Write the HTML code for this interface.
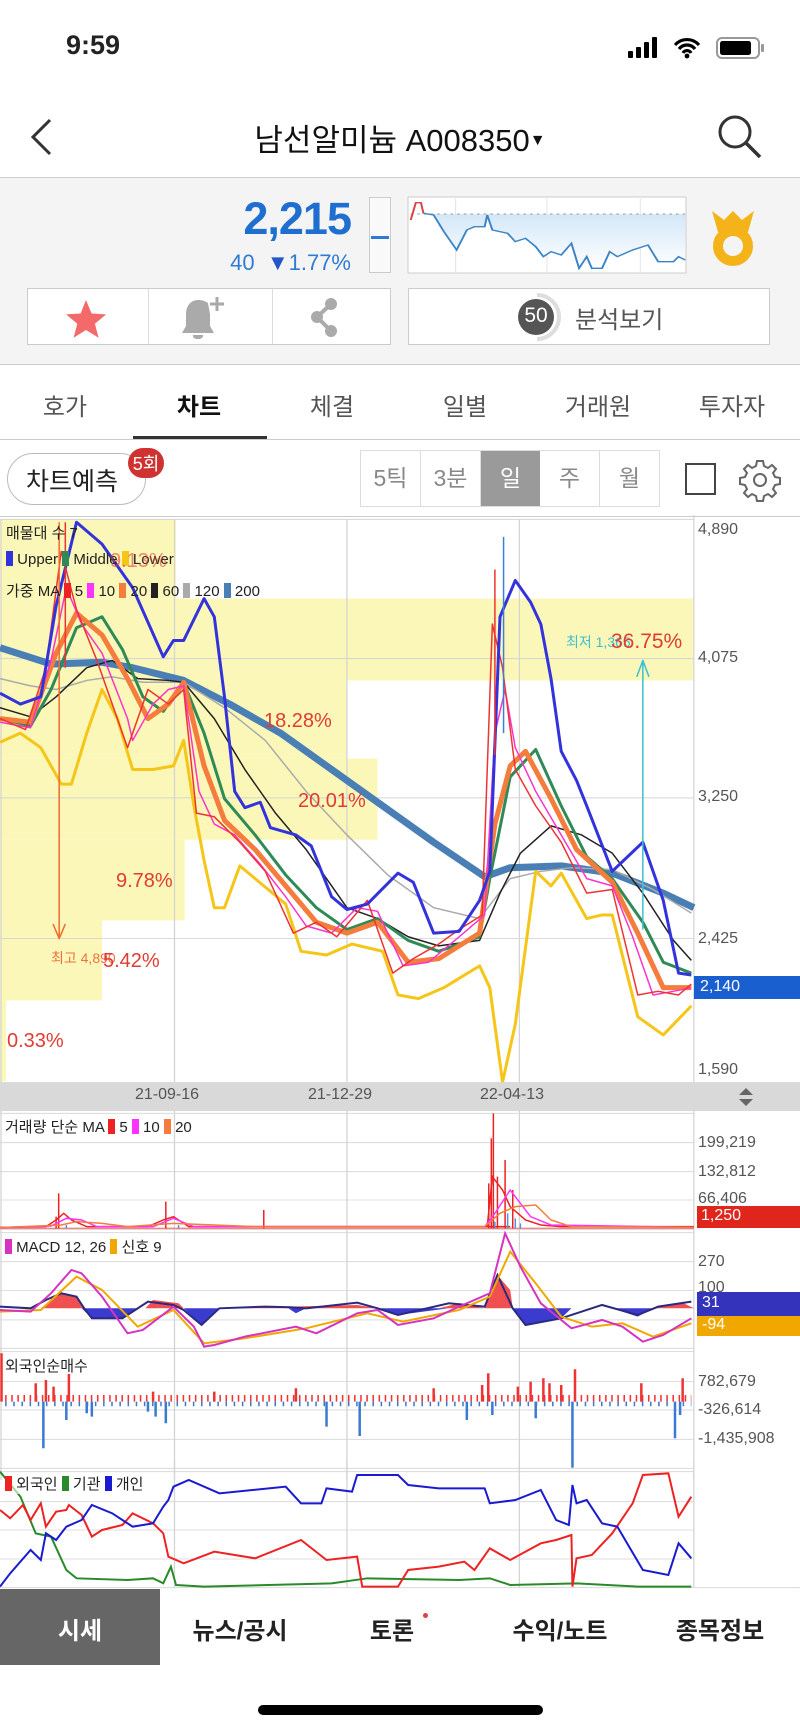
<!DOCTYPE html>
<html><head><meta charset="utf-8">
<style>
*{margin:0;padding:0;box-sizing:border-box}
body{width:800px;height:1731px;background:#fff;font-family:"Liberation Sans","Noto Sans CJK KR",sans-serif;position:relative;overflow:hidden;color:#222}
.a{position:absolute}
.t{position:absolute;white-space:nowrap}
</style></head><body>
<!-- status bar -->
<div class="t" style="left:66px;top:30px;font-size:27px;font-weight:bold">9:59</div>
<svg class="a" style="left:625px;top:36px" width="150" height="26">
<rect x="3" y="15" width="5" height="7" rx="1" fill="#000"/><rect x="11" y="11" width="5" height="11" rx="1" fill="#000"/><rect x="19" y="6" width="5" height="16" rx="1" fill="#000"/><rect x="27" y="1" width="5" height="21" rx="1" fill="#000"/>
<path d="M50 9a16 16 0 0 1 24 0M54 13a10 10 0 0 1 16 0M58 17a4.5 4.5 0 0 1 8 0" stroke="#000" stroke-width="3.2" fill="none"/><circle cx="62" cy="20" r="2.4" fill="#000"/>
<rect x="92" y="2" width="42" height="20" rx="5" stroke="#999" stroke-width="2" fill="none"/><rect x="95" y="5" width="31" height="14" rx="2.5" fill="#000"/><rect x="136" y="8" width="3" height="8" rx="1" fill="#999"/>
</svg>
<!-- header -->
<svg class="a" style="left:28px;top:117px" width="28" height="40"><path d="M22 3L5 20L22 37" stroke="#333" stroke-width="3" fill="none"/></svg>
<div class="t" style="left:0;width:800px;text-align:center;top:115px;font-size:31px;color:#111">남선알미늄 A008350<span style="font-size:16px;vertical-align:6px">▼</span></div>
<svg class="a" style="left:715px;top:112px" width="48" height="48"><circle cx="20" cy="20" r="15" stroke="#333" stroke-width="3" fill="none"/><path d="M31 31L45 45" stroke="#333" stroke-width="3.5"/></svg>
<!-- info area -->
<div class="a" style="left:0;top:177px;width:800px;height:188px;background:#f4f4f4;border-top:1px solid #ccc;border-bottom:1px solid #ccc"></div>
<div class="t" style="right:449px;top:193px;font-size:45px;font-weight:bold;color:#1f6fd0;letter-spacing:-1px">2,215</div>
<div class="t" style="right:449px;top:250px;font-size:22px;color:#2f7bd4">40 &nbsp;<span style="color:#2456c8">▼</span>1.77%</div>
<div class="a" style="left:369px;top:197px;width:22px;height:76px;border:1px solid #ccc;background:#f9f9f9"></div>
<div class="a" style="left:371px;top:236px;width:18px;height:3px;background:#2f7bd4"></div>
<svg class="a" style="left:0;top:0" width="800" height="300">
<defs><linearGradient id="sg" x1="0" y1="0" x2="0" y2="1"><stop offset="0" stop-color="#d3e7f8"/><stop offset="1" stop-color="#fff"/></linearGradient></defs>
<rect x="408" y="197" width="278" height="76" fill="#fff" stroke="#ccc"/>
<g transform="translate(0,160) scale(0.5102,0.3333)">
<line x1="893" y1="115" x2="893" y2="340" stroke="#e4e4e4" stroke-width="2"/><line x1="1072" y1="115" x2="1072" y2="340" stroke="#e4e4e4" stroke-width="2"/><line x1="1255" y1="115" x2="1255" y2="340" stroke="#e4e4e4" stroke-width="2"/>
<polygon fill="url(#sg)" points="805,162 830,160 850,165 870,215 895,270 915,210 930,200 950,200 955,165 965,210 995,220 1010,245 1030,235 1050,260 1065,290 1080,275 1100,285 1120,250 1135,325 1150,290 1160,325 1180,325 1195,275 1210,290 1240,270 1270,255 1290,305 1320,305 1330,290 1343,300 1343,162"/>
<line x1="805" y1="162" x2="1343" y2="162" stroke="#999" stroke-width="3" stroke-dasharray="5 8"/>
<polyline fill="none" stroke="#d44" stroke-width="4" points="805,180 815,128 825,128 830,160"/>
<polyline fill="none" stroke="#3c84c8" stroke-width="4" points="830,160 850,165 870,215 895,270 915,210 930,200 950,200 955,165 965,210 995,220 1010,245 1030,235 1050,260 1065,290 1080,275 1100,285 1120,250 1135,325 1150,290 1160,325 1180,325 1195,275 1210,290 1240,270 1270,255 1290,305 1320,305 1330,290 1343,300"/>
</g>
<!-- medal -->
<path d="M712 211l12 9 9-9 9 9 12-9-6 21h-30z" fill="#f5b31a"/>
<circle cx="733" cy="246" r="15" stroke="#f5b31a" stroke-width="10" fill="none"/>
</svg>
<!-- buttons -->
<div class="a" style="left:27px;top:288px;width:364px;height:57px;background:#fff;border:1px solid #ccc"></div>
<div class="a" style="left:148px;top:289px;width:1px;height:55px;background:#ddd"></div>
<div class="a" style="left:272px;top:289px;width:1px;height:55px;background:#ddd"></div>
<div class="a" style="left:408px;top:288px;width:362px;height:57px;background:#fff;border:1px solid #ccc"></div>
<svg class="a" style="left:0;top:280px" width="800" height="70">
<path d="M86 20l5.6 13.5 14.5.9-11.2 9.3 3.7 14.1L86 50l-12.4 7.8 3.7-14.1-11.2-9.3 14.5-.9z" fill="#f46a6a"/>
<path d="M198 59c-6 0-5-4-5-4h10s1 4-5 4z M208 23c-3-2-6-3-10-3-8 0-12 7-12 14v12l-4 7h32l-4-7V34" fill="#aaa"/>
<path d="M217 17v14M210 24h14" stroke="#aaa" stroke-width="3"/>
<circle cx="331" cy="24" r="6" fill="#aaa"/><circle cx="331" cy="51" r="6" fill="#aaa"/><circle cx="317" cy="37" r="6" fill="#aaa"/><path d="M331 24L317 37L331 51" stroke="#aaa" stroke-width="4" fill="none"/>
<path d="M537 15a22 22 0 0 1 0 44" stroke="#ddd" stroke-width="4" fill="none"/>
<circle cx="536" cy="37" r="18" fill="#555"/>
</svg>
<div class="t" style="left:518px;top:304px;width:36px;text-align:center;font-size:21px;color:#fff">50</div>
<div class="t" style="left:575px;top:300px;font-size:24px;color:#555">분석보기</div>
<!-- tabs -->
<div class="t" style="left:0;top:387px;width:800px;font-size:24px;color:#555">
<span class="t" style="left:65px;transform:translateX(-50%)">호가</span>
<span class="t" style="left:199px;transform:translateX(-50%);font-weight:bold;color:#111">차트</span>
<span class="t" style="left:332px;transform:translateX(-50%)">체결</span>
<span class="t" style="left:465px;transform:translateX(-50%)">일별</span>
<span class="t" style="left:598px;transform:translateX(-50%)">거래원</span>
<span class="t" style="left:732px;transform:translateX(-50%)">투자자</span>
</div>
<div class="a" style="left:133px;top:436px;width:134px;height:3px;background:#333"></div>
<div class="a" style="left:0;top:439px;width:800px;height:1px;background:#ccc"></div>
<!-- toolbar -->
<div class="a" style="left:7px;top:453px;width:139px;height:52px;border:1.5px solid #bbb;border-radius:26px;background:#fff"></div>
<div class="t" style="left:26px;top:462px;font-size:25px;color:#222">차트예측</div>
<div class="a" style="left:128px;top:448px;width:36px;height:30px;border-radius:15px;background:#d03232"></div>
<div class="t" style="left:128px;top:450px;width:36px;text-align:center;font-size:18px;color:#fff">5회</div>
<div class="a" style="left:360px;top:450px;width:300px;height:57px;border:1px solid #ddd;display:flex;font-size:23px;color:#888">
<div style="flex:1;text-align:center;line-height:55px;border-right:1px solid #ddd">5틱</div>
<div style="flex:1;text-align:center;line-height:55px;border-right:1px solid #ddd">3분</div>
<div style="flex:1;text-align:center;line-height:55px;background:#9a9a9a;color:#fff">일</div>
<div style="flex:1;text-align:center;line-height:55px;border-right:1px solid #ddd">주</div>
<div style="flex:1;text-align:center;line-height:55px">월</div>
</div>
<div class="a" style="left:685px;top:463px;width:31px;height:32px;border:2px solid #444"></div>
<svg class="a" style="left:738px;top:458px" width="44" height="44" viewBox="-22 -22 44 44">
<path fill="none" stroke="#666" stroke-width="2" d="M-3-19h6l1 5 4 2 4-3 4 4-3 4 2 4 5 1v6l-5 1-2 4 3 4-4 4-4-3-4 2-1 5h-6l-1-5-4-2-4 3-4-4 3-4-2-4-5-1v-6l5-1 2-4-3-4 4-4 4 3 4-2z"/><circle r="6" fill="none" stroke="#666" stroke-width="2"/></svg>
<div class="a" style="left:0;top:516px;width:800px;height:1px;background:#ccc"></div>

<!-- main chart -->
<svg class="a" style="left:0;top:0" width="800" height="1731">
<g transform="translate(0,515) scale(0.5102,0.3636)">
<g fill="#fbf7b9">
<rect x="0" y="12" width="345" height="218"/>
<rect x="0" y="230" width="1360" height="225"/>
<rect x="0" y="455" width="680" height="215"/>
<rect x="0" y="670" width="740" height="223"/>
<rect x="0" y="893" width="362" height="222"/>
<rect x="0" y="1115" width="200" height="220"/>
<rect x="0" y="1335" width="12" height="222"/>
</g>
<g stroke="#d4d4d4" stroke-width="2.5">
<line x1="0" y1="12" x2="1360" y2="12"/><line x1="0" y1="395" x2="1360" y2="395"/><line x1="0" y1="778" x2="1360" y2="778"/><line x1="0" y1="1165" x2="1360" y2="1165"/>
<line x1="342" y1="12" x2="342" y2="1565"/><line x1="680" y1="12" x2="680" y2="1565"/><line x1="1018" y1="12" x2="1018" y2="1565"/><line x1="1360" y1="0" x2="1360" y2="1568"/><line x1="2" y1="12" x2="2" y2="1565"/>
</g>
<g fill="none" stroke-linejoin="round" vector-effect="non-scaling-stroke">
<polyline stroke="#4a7fb5" stroke-width="7" vector-effect="non-scaling-stroke" points="0,365 100,410 200,405 260,420 360,455 450,520 550,600 650,700 750,800 850,900 950,995 1000,970 1100,965 1200,985 1300,1040 1360,1080"/>
<polyline stroke="#aaa" stroke-width="1.5" vector-effect="non-scaling-stroke" points="0,450 60,470 110,480 170,455 220,445 280,460 360,460 440,530 520,620 600,760 680,880 760,990 850,1080 940,1110 1000,1000 1060,980 1120,970 1200,975 1280,1030 1355,1095"/>
<polyline stroke="#222" stroke-width="1.5" vector-effect="non-scaling-stroke" points="0,530 60,555 110,500 170,420 220,400 270,450 330,455 360,460 420,560 480,700 540,820 600,920 680,1080 740,1110 800,1160 860,1185 940,1170 980,1040 1020,930 1080,855 1140,880 1200,930 1260,1040 1320,1170 1355,1225"/>
<polyline stroke="#f5c518" stroke-width="3" vector-effect="non-scaling-stroke" points="0,625 40,600 80,640 120,740 140,740 170,600 200,480 230,560 260,700 300,700 340,690 360,620 380,800 400,950 420,1080 440,1080 470,965 500,1000 560,1070 590,1200 640,1210 690,1180 750,1200 780,1320 820,1330 870,1300 940,1240 960,1300 985,1560 1010,1400 1050,980 1080,1020 1100,985 1150,1110 1180,1100 1200,1100 1250,1380 1300,1430 1355,1350"/>
<polyline stroke="#2e8b57" stroke-width="3" vector-effect="non-scaling-stroke" points="0,560 60,580 100,480 150,310 200,280 240,370 280,500 320,540 360,460 400,600 440,780 500,880 560,990 620,1080 680,1140 740,1110 800,1170 860,1200 940,1160 960,1000 1000,720 1050,645 1100,800 1150,940 1200,1000 1260,1120 1300,1230 1355,1260"/>
<polyline stroke="#f47c3c" stroke-width="5" vector-effect="non-scaling-stroke" points="0,560 60,570 110,380 150,270 200,330 250,450 290,560 330,520 360,460 400,690 440,840 500,920 560,1020 620,1120 680,1150 740,1120 800,1230 860,1220 940,1150 970,850 1000,690 1030,650 1080,780 1130,920 1200,1010 1250,1150 1300,1300 1355,1300"/>
<polyline stroke="#ff33cc" stroke-width="1.5" vector-effect="non-scaling-stroke" points="0,570 60,585 100,400 130,200 160,300 200,380 250,560 260,620 300,520 330,480 360,470 390,760 420,850 460,880 510,960 560,1050 600,1130 650,1150 700,1080 740,1090 790,1240 840,1230 900,1160 950,1100 970,600 990,480 1010,640 1050,760 1100,880 1150,1000 1200,1020 1240,1160 1280,1320 1320,1310 1355,1300"/>
<polyline stroke="#e33" stroke-width="1.5" vector-effect="non-scaling-stroke" points="0,560 50,590 90,420 120,100 150,260 190,400 250,640 290,480 330,520 360,480 385,820 420,830 470,900 520,980 575,1150 620,1120 660,1160 720,1060 770,1260 810,1220 860,1180 900,1140 945,1100 965,300 985,420 1010,700 1050,800 1100,900 1150,1040 1200,1030 1250,1320 1290,1310 1330,1320 1355,1290"/>
<polyline stroke="#3333dd" stroke-width="3" vector-effect="non-scaling-stroke" points="0,490 40,520 80,500 110,250 150,20 200,80 260,200 320,390 340,345 360,345 400,230 420,280 440,500 460,760 480,805 510,790 530,860 580,880 610,910 650,1050 680,1085 720,1070 780,985 810,1010 850,1150 900,1145 940,1060 960,980 980,280 1010,180 1040,240 1060,300 1080,450 1100,650 1130,730 1150,800 1200,980 1260,900 1300,1060 1330,1260 1355,1265"/>
<line x1="987" y1="60" x2="987" y2="600" stroke="#3c7fd4" stroke-width="1.5" vector-effect="non-scaling-stroke"/>
<line x1="970" y1="150" x2="970" y2="660" stroke="#e33" stroke-width="1.5" vector-effect="non-scaling-stroke"/>
<line x1="128" y1="20" x2="128" y2="420" stroke="#e33" stroke-width="1.5" vector-effect="non-scaling-stroke"/>
<line x1="116" y1="20" x2="116" y2="1165" stroke="#f06a30" stroke-width="1.5" vector-effect="non-scaling-stroke"/>
<polyline points="104,1125 116,1165 128,1125" stroke="#f06a30" stroke-width="1.5" vector-effect="non-scaling-stroke"/>
<line x1="1260" y1="400" x2="1260" y2="1140" stroke="#3cc0d0" stroke-width="1.5" vector-effect="non-scaling-stroke"/>
<polyline points="1248,445 1260,400 1272,445" stroke="#3cc0d0" stroke-width="1.5" vector-effect="non-scaling-stroke"/>
</g>
</g>
</svg>
<div class="t" style="left:6px;top:522px;font-size:15px;color:#222">매물대 수 7</div>
<div class="t" style="left:6px;top:551px;font-size:15px;color:#222"><span style="display:inline-block;width:7px;height:15px;background:#3333dd;vertical-align:-2px"></span> Upper <span style="display:inline-block;width:7px;height:15px;background:#2e8b57;vertical-align:-2px"></span> Middle <span style="display:inline-block;width:7px;height:15px;background:#f5c518;vertical-align:-2px"></span> Lower</div>
<div class="t" style="left:6px;top:580px;font-size:15px;color:#222">가중 MA <span style="display:inline-block;width:7px;height:15px;background:#e22;vertical-align:-2px"></span> 5 <span style="display:inline-block;width:7px;height:15px;background:#f3f;vertical-align:-2px"></span> 10 <span style="display:inline-block;width:7px;height:15px;background:#f47c3c;vertical-align:-2px"></span> 20 <span style="display:inline-block;width:7px;height:15px;background:#222;vertical-align:-2px"></span> 60 <span style="display:inline-block;width:7px;height:15px;background:#aaa;vertical-align:-2px"></span> 120 <span style="display:inline-block;width:7px;height:15px;background:#4a7fb5;vertical-align:-2px"></span> 200</div>
<div class="t" style="left:110px;top:550px;font-size:20px;color:#e03c31;opacity:.6">9.13%</div>
<div class="t" style="left:264px;top:710px;font-size:20px;color:#e03c31">18.28%</div>
<div class="t" style="left:298px;top:790px;font-size:20px;color:#e03c31">20.01%</div>
<div class="t" style="left:116px;top:870px;font-size:20px;color:#e03c31">9.78%</div>
<div class="t" style="left:51px;top:948px;font-size:14px;color:#f07040">최고 4,890</div>
<div class="t" style="left:103px;top:950px;font-size:20px;color:#e03c31">5.42%</div>
<div class="t" style="left:7px;top:1030px;font-size:20px;color:#e03c31">0.33%</div>
<div class="t" style="left:566px;top:632px;font-size:14px;color:#3cc0d0">최저 1,365</div>
<div class="t" style="left:611px;top:630px;font-size:21px;color:#e03c31">36.75%</div>
<div class="t" style="left:698px;top:521px;font-size:16px;color:#555">4,890</div>
<div class="t" style="left:698px;top:649px;font-size:16px;color:#555">4,075</div>
<div class="t" style="left:698px;top:788px;font-size:16px;color:#555">3,250</div>
<div class="t" style="left:698px;top:930px;font-size:16px;color:#555">2,425</div>
<div class="a" style="left:694px;top:976px;width:106px;height:23px;background:#1a5fd0"></div>
<div class="t" style="left:700px;top:978px;font-size:16px;color:#fff">2,140</div>
<div class="t" style="left:698px;top:1061px;font-size:16px;color:#555">1,590</div>
<!-- date bar -->
<div class="a" style="left:0;top:1082px;width:800px;height:29px;background:#d9d9d9"></div>
<div class="t" style="left:135px;top:1086px;font-size:16px;color:#555">21-09-16</div>
<div class="t" style="left:308px;top:1086px;font-size:16px;color:#555">21-12-29</div>
<div class="t" style="left:480px;top:1086px;font-size:16px;color:#555">22-04-13</div>
<svg class="a" style="left:738px;top:1087px" width="16" height="20"><path d="M1 8L8 1l7 7zM1 12l7 7 7-7z" fill="#666"/></svg>
<!-- lower panels -->
<svg class="a" style="left:0;top:0" width="800" height="1731">
<g transform="translate(0,1080) scale(0.5102,0.3333)">
<g stroke="#d4d4d4" stroke-width="2.5">
<line x1="0" y1="100" x2="1360" y2="100"/><line x1="0" y1="188" x2="1360" y2="188"/><line x1="0" y1="275" x2="1360" y2="275"/><line x1="0" y1="360" x2="1360" y2="360"/><line x1="0" y1="448" x2="1360" y2="448"/>
<line x1="0" y1="458" x2="1360" y2="458"/><line x1="0" y1="545" x2="1360" y2="545"/><line x1="0" y1="632" x2="1360" y2="632"/><line x1="0" y1="720" x2="1360" y2="720"/><line x1="0" y1="805" x2="1360" y2="805"/>
<line x1="0" y1="815" x2="1360" y2="815"/><line x1="0" y1="905" x2="1360" y2="905"/><line x1="0" y1="990" x2="1360" y2="990"/><line x1="0" y1="1078" x2="1360" y2="1078"/><line x1="0" y1="1165" x2="1360" y2="1165"/>
<line x1="342" y1="90" x2="342" y2="1200"/><line x1="680" y1="90" x2="680" y2="1200"/><line x1="1018" y1="90" x2="1018" y2="1200"/><line x1="1360" y1="90" x2="1360" y2="1200"/><line x1="2" y1="90" x2="2" y2="1200"/>
</g>
<g fill="none" stroke-width="1.5">
<line x1="0" y1="445" x2="1360" y2="445" stroke="#e88" vector-effect="non-scaling-stroke"/>
<path stroke="#e22" vector-effect="non-scaling-stroke" d="M115 445V340M110 445V410M325 445V365M517 445V390M967 445V100M963 445V175M990 445V240M958 445V310M975 445V290M1005 445V330"/>
<polyline stroke="#e22" vector-effect="non-scaling-stroke" points="0,442 90,440 110,420 125,400 140,420 170,440 290,440 320,420 340,410 370,440 1000,440 955,440 965,290 985,330 1000,380 1030,420 1060,435 1100,440 1360,440"/>
<polyline stroke="#f3f" vector-effect="non-scaling-stroke" points="0,443 100,438 130,415 160,420 190,440 300,440 340,415 380,440 950,440 970,400 1000,330 1010,350 1040,410 1080,435 1360,442"/>
<polyline stroke="#f47c3c" vector-effect="non-scaling-stroke" points="0,443 120,435 150,425 200,430 250,440 340,430 420,435 500,440 620,440 950,440 980,400 1010,380 1050,375 1080,420 1120,440 1360,442"/>
<path stroke="#5b8fd8" vector-effect="non-scaling-stroke" d="M970 445V425M995 445V400M1010 445V415M1020 445V430M130 445V435M350 445V435"/>
</g>
<g>
<polygon fill="#f05050" points="80,685 120,640 150,650 165,685"/>
<polygon fill="#f05050" points="285,685 300,660 350,670 360,685"/>
<polygon fill="#f05050" points="950,685 975,585 1000,630 1005,685"/>
<polygon fill="#f05050" points="420,685 700,675 740,685"/>
<polygon fill="#f05050" points="860,685 900,670 950,685"/>
<polygon fill="#f05050" points="1280,685 1340,670 1360,685"/>
<polygon fill="#3b3bd0" points="160,685 180,715 240,715 265,690 270,685"/>
<polygon fill="#3b3bd0" points="360,685 395,735 420,700 430,685"/>
<polygon fill="#3b3bd0" points="1005,685 1030,735 1100,715 1120,685"/>
<polygon fill="#3b3bd0" points="565,685 580,700 600,685"/>
<polygon fill="#3b3bd0" points="740,685 780,705 880,685"/>
<polygon fill="#3b3bd0" points="1200,685 1250,710 1280,685"/>
</g>
<g fill="none" stroke-width="2">
<polyline stroke="#2a2a80" vector-effect="non-scaling-stroke" points="0,680 60,685 90,660 120,640 150,650 165,685 180,715 240,715 265,690 290,665 340,675 360,690 395,735 430,685 520,680 570,682 600,685 700,668 740,685 780,705 880,670 950,680 975,585 1005,685 1030,735 1100,715 1180,675 1250,705 1290,680 1355,665"/>
<polyline stroke="#f0a800" vector-effect="non-scaling-stroke" points="0,695 80,690 150,590 200,630 270,740 340,690 400,790 480,775 600,745 720,700 790,725 900,690 960,650 1000,515 1050,610 1100,710 1160,740 1220,730 1280,770 1355,730"/>
<polyline stroke="#d633c0" vector-effect="non-scaling-stroke" points="0,690 60,695 100,640 140,570 160,580 200,650 250,760 280,750 340,680 380,740 400,800 420,795 480,770 580,740 620,760 700,700 740,690 780,735 850,715 900,680 960,640 990,460 1020,560 1060,670 1120,745 1180,720 1220,740 1260,785 1300,765 1355,715"/>
</g>
<line x1="10" y1="955" x2="1355" y2="955" stroke="#e33" stroke-width="20" stroke-dasharray="3 9"/>
<line x1="10" y1="972" x2="1355" y2="972" stroke="#3a7ad0" stroke-width="14" stroke-dasharray="3 13"/>
<path fill="none" stroke="#e33" stroke-width="2.5" vector-effect="non-scaling-stroke" d="M3 965V820M70 965V910M90 965V900M105 965V920M135 965V882M420 965V935M580 965V925M850 965V925M957 965V880M1065 965V895M1077 965V910M1100 965V915M1127 965V868M1257 965V910M1338 965V895M300 965V935M945 965V915M1015 965V920M1040 965V905"/>
<path fill="none" stroke="#3a7ad0" stroke-width="2.5" vector-effect="non-scaling-stroke" d="M85 965V1105M130 965V1020M180 965V1010M170 965V1000M325 965V1030M305 965V1010M640 965V1040M705 965V1068M915 965V1020M1050 965V1015M1122 965V1163M1323 965V1075M1333 965V1005M965 965V1005M290 965V995"/>
</g>
<g transform="translate(0,1460) scale(0.5102,0.3333)">
<g stroke="#d4d4d4" stroke-width="2.5">
<line x1="0" y1="35" x2="1360" y2="35"/><line x1="0" y1="125" x2="1360" y2="125"/><line x1="0" y1="210" x2="1360" y2="210"/><line x1="0" y1="297" x2="1360" y2="297"/><line x1="0" y1="383" x2="1568" y2="383"/>
<line x1="342" y1="0" x2="342" y2="383"/><line x1="680" y1="0" x2="680" y2="383"/><line x1="1018" y1="0" x2="1018" y2="383"/><line x1="1360" y1="0" x2="1360" y2="383"/>
</g>
<g fill="none" stroke-width="2">
<polyline stroke="#2a8a2a" vector-effect="non-scaling-stroke" points="0,35 40,110 70,220 100,230 130,330 150,355 250,360 300,355 320,370 335,320 345,375 400,380 650,370 720,355 900,360 960,355 1000,375 1130,370 1250,380 1355,380"/>
<polyline stroke="#e22" vector-effect="non-scaling-stroke" points="0,150 20,175 45,135 60,180 80,130 90,200 110,155 130,150 135,135 160,165 180,230 200,210 240,195 260,160 300,190 320,220 330,290 360,310 420,275 500,295 590,240 640,300 700,290 710,380 780,380 800,330 860,320 910,305 930,330 960,265 1000,300 1060,250 1090,240 1120,225 1122,380 1130,295 1160,285 1200,220 1240,130 1260,45 1310,40 1330,170 1355,110"/>
<polyline stroke="#1a1ad0" vector-effect="non-scaling-stroke" points="0,380 20,340 60,270 80,300 90,220 110,240 130,200 160,180 180,135 220,160 260,200 300,190 320,140 330,120 340,80 370,60 430,100 560,80 590,130 630,130 640,85 690,95 700,45 780,45 800,75 860,85 950,85 960,130 1010,120 1060,90 1090,180 1115,195 1122,75 1130,130 1150,120 1180,190 1210,200 1260,330 1310,345 1330,250 1355,295"/>
</g>
</g>
</svg>
<div class="t" style="left:5px;top:1116px;font-size:15px;color:#222">거래량 단순 MA <span style="display:inline-block;width:7px;height:15px;background:#e22;vertical-align:-2px"></span> 5 <span style="display:inline-block;width:7px;height:15px;background:#f3f;vertical-align:-2px"></span> 10 <span style="display:inline-block;width:7px;height:15px;background:#f47c3c;vertical-align:-2px"></span> 20</div>
<div class="t" style="left:698px;top:1134px;font-size:16px;color:#555">199,219</div>
<div class="t" style="left:698px;top:1163px;font-size:16px;color:#555">132,812</div>
<div class="t" style="left:698px;top:1190px;font-size:16px;color:#555">66,406</div>
<div class="a" style="left:697px;top:1206px;width:103px;height:22px;background:#e0261c"></div>
<div class="t" style="left:701px;top:1207px;font-size:16px;color:#fff">1,250</div>
<div class="t" style="left:5px;top:1236px;font-size:15px;color:#222"><span style="display:inline-block;width:7px;height:15px;background:#d633c0;vertical-align:-2px"></span> MACD 12, 26 <span style="display:inline-block;width:7px;height:15px;background:#f0a800;vertical-align:-2px"></span> 신호 9</div>
<div class="t" style="left:698px;top:1253px;font-size:16px;color:#555">270</div>
<div class="t" style="left:698px;top:1279px;font-size:16px;color:#555">100</div>
<div class="a" style="left:697px;top:1292px;width:103px;height:24px;background:#3333bb"></div>
<div class="t" style="left:702px;top:1294px;font-size:16px;color:#fff">31</div>
<div class="a" style="left:697px;top:1316px;width:103px;height:20px;background:#f0a800"></div>
<div class="t" style="left:702px;top:1316px;font-size:16px;color:#fff">-94</div>
<div class="t" style="left:5px;top:1355px;font-size:15px;color:#222">외국인순매수</div>
<div class="t" style="left:698px;top:1373px;font-size:16px;color:#555">782,679</div>
<div class="t" style="left:698px;top:1401px;font-size:16px;color:#555">-326,614</div>
<div class="t" style="left:698px;top:1430px;font-size:16px;color:#555">-1,435,908</div>
<div class="t" style="left:5px;top:1473px;font-size:15px;color:#222;background:rgba(255,255,255,.6)"><span style="display:inline-block;width:7px;height:15px;background:#e22;vertical-align:-2px"></span> 외국인 <span style="display:inline-block;width:7px;height:15px;background:#2a8a2a;vertical-align:-2px"></span> 기관 <span style="display:inline-block;width:7px;height:15px;background:#1a1ad0;vertical-align:-2px"></span> 개인</div>
<!-- bottom nav -->
<div class="a" style="left:0;top:1589px;width:160px;height:76px;background:#666"></div>
<div class="t" style="left:0;top:1611px;width:800px;font-size:24px;font-weight:bold;color:#222">
<span class="t" style="left:80px;transform:translateX(-50%);color:#fff">시세</span>
<span class="t" style="left:240px;transform:translateX(-50%)">뉴스/공시</span>
<span class="t" style="left:392px;transform:translateX(-50%)">토론</span>
<span class="t" style="left:560px;transform:translateX(-50%)">수익/노트</span>
<span class="t" style="left:720px;transform:translateX(-50%)">종목정보</span>
</div>
<div class="a" style="left:423px;top:1613px;width:5px;height:5px;border-radius:50%;background:#e04040"></div>
<div class="a" style="left:258px;top:1705px;width:285px;height:10px;border-radius:5px;background:#000"></div>
</body></html>
